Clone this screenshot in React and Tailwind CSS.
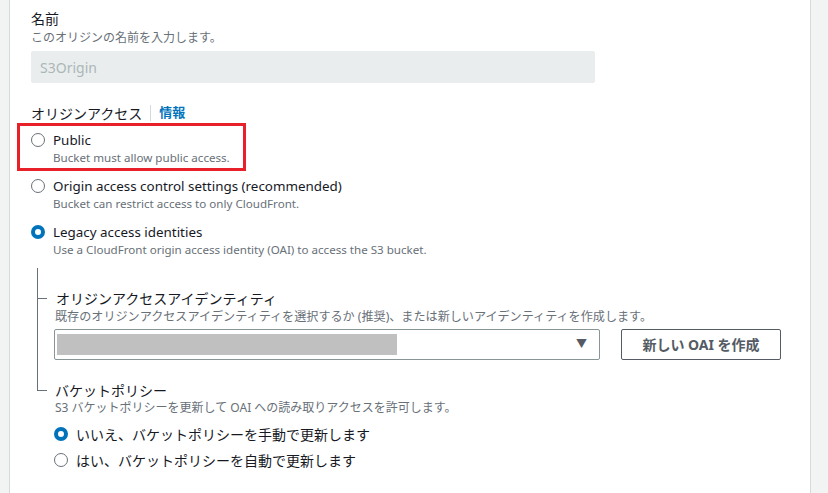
const FONT = { fontFamily: '"Noto Sans", "Noto Sans CJK JP", sans-serif' }

function Radio({ checked }) {
  return checked ? (
    <span className="w-[14px] h-[14px] rounded-full border-[4px] border-[#0073bb] bg-white shrink-0" />
  ) : (
    <span className="w-[14px] h-[14px] rounded-full border-[1.5px] border-[#687078] bg-white shrink-0" />
  )
}

function AccessOption({ label, desc, checked }) {
  return (
    <div className="flex flex-col">
      <div className="flex items-center gap-[8px] h-[20px]">
        <Radio checked={checked} />
        <span className="text-[13.4px] text-[#16191f]">{label}</span>
      </div>
      <p className="pl-[22px] text-[11.6px] leading-[16px] text-[#687078]">{desc}</p>
    </div>
  )
}

export default function App() {
  return (
    <div className="flex w-[828px] h-[493px] overflow-hidden bg-[#f2f3f3]" style={FONT}>
      <div className="w-[10px] shrink-0 border-r border-[#d5dbdb]" />
      <div className="w-[800px] shrink-0 bg-white pl-[21px] pt-[9px]">
        <p className="text-[14px] leading-[20px] text-[#16191f]">名前</p>
        <p className="text-[12px] leading-[16px] text-[#687078] mt-[1px]">このオリジンの名前を入力します。</p>
        <div className="mt-[5px] w-[564px] h-[32px] bg-[#eaeded] rounded-[2px] flex items-center px-[9px] text-[14px] text-[#aab7b8]">
          S3Origin
        </div>

        <div className="mt-[20px] flex items-center h-[20px] text-[14px]">
          <span className="text-[#16191f]">オリジンアクセス</span>
          <span className="mx-[8px] w-px h-[16px] bg-[#d5dbdb]" />
          <span className="text-[#0073bb] font-bold text-[13px]">情報</span>
        </div>

        <div className="relative mt-[7px] flex flex-col gap-[10px]">
          <AccessOption label="Public" desc="Bucket must allow public access." />
          <AccessOption
            label="Origin access control settings (recommended)"
            desc="Bucket can restrict access to only CloudFront."
          />
          <AccessOption
            checked
            label="Legacy access identities"
            desc="Use a CloudFront origin access identity (OAI) to access the S3 bucket."
          />
          <div className="absolute left-[-14px] top-[-7px] w-[229px] h-[48px] border-[3px] border-[#e8202a]" />
        </div>

        <div className="ml-[6px] mt-[10px]">
          <div className="border-l border-[#687078] pt-[20px] pb-[21px]">
            <div className="flex items-center h-[20px]">
              <span className="w-[9px] h-px bg-[#687078] mr-[9px]" />
              <span className="text-[14px] text-[#16191f]">オリジンアクセスアイデンティティ</span>
            </div>
            <p className="pl-[17px] text-[12.1px] leading-[16px] text-[#687078] mt-[1px]">
              既存のオリジンアクセスアイデンティティを選択するか (推奨)、または新しいアイデンティティを作成します。
            </p>
            <div className="pl-[16px] mt-[4px] flex gap-[21px]">
              <div className="w-[546px] h-[31px] border border-[#879596] rounded-[2px] flex items-center pl-[2px] pr-[12px]">
                <div className="w-[340px] h-[21px] bg-[#c0c0c0]" />
                <span className="ml-auto text-[11px] text-[#545b64]">▼</span>
              </div>
              <button className="w-[160px] h-[31px] border border-[#545b64] rounded-[2px] text-[14px] font-bold text-[#545b64]">
                新しい OAI を作成
              </button>
            </div>
          </div>
          <div className="flex items-start h-[20px]">
            <span className="w-[10px] h-[10px] border-l border-b border-[#687078] mr-[8px]" />
            <span className="text-[14px] leading-[20px] text-[#16191f]">バケットポリシー</span>
          </div>
          <p className="pl-[18px] text-[12px] leading-[16px] text-[#687078] mt-[-1px]">
            S3 バケットポリシーを更新して OAI への読み取りアクセスを許可します。
          </p>
          <div className="pl-[17px] mt-[8px] flex flex-col gap-[6px]">
            <div className="flex items-center gap-[8px] h-[20px]">
              <Radio checked />
              <span className="text-[14px] text-[#16191f]">いいえ、バケットポリシーを手動で更新します</span>
            </div>
            <div className="flex items-center gap-[8px] h-[20px]">
              <Radio />
              <span className="text-[14px] text-[#16191f]">はい、バケットポリシーを自動で更新します</span>
            </div>
          </div>
        </div>
      </div>
      <div className="flex-1 border-l border-[#d5dbdb]" />
    </div>
  )
}
